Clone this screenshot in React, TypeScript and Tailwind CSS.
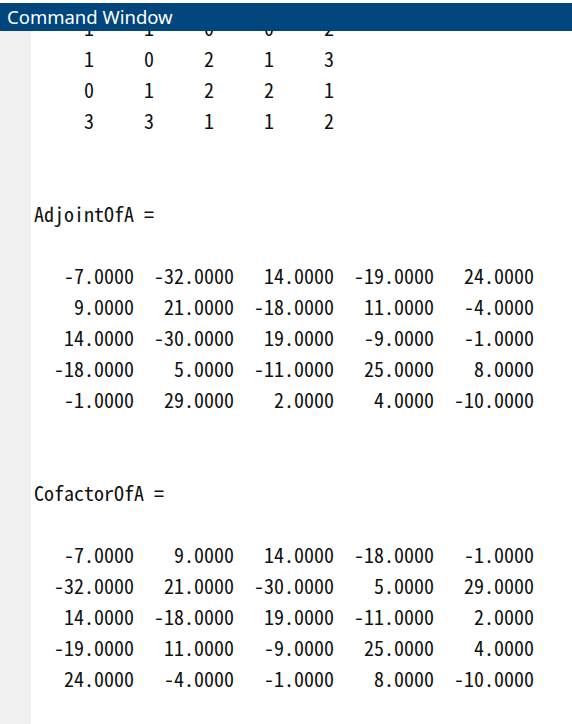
import React from "react";

const lines: string[] = [
  "     1     1     0     0     2",
  "     1     0     2     1     3",
  "     0     1     2     2     1",
  "     3     3     1     1     2",
  "",
  "",
  "AdjointOfA =",
  "",
  "   -7.0000  -32.0000   14.0000  -19.0000   24.0000",
  "    9.0000   21.0000  -18.0000   11.0000   -4.0000",
  "   14.0000  -30.0000   19.0000   -9.0000   -1.0000",
  "  -18.0000    5.0000  -11.0000   25.0000    8.0000",
  "   -1.0000   29.0000    2.0000    4.0000  -10.0000",
  "",
  "",
  "CofactorOfA =",
  "",
  "   -7.0000    9.0000   14.0000  -18.0000   -1.0000",
  "  -32.0000   21.0000  -30.0000    5.0000   29.0000",
  "   14.0000  -18.0000   19.0000  -11.0000    2.0000",
  "  -19.0000   11.0000   -9.0000   25.0000    4.0000",
  "   24.0000   -4.0000   -1.0000    8.0000  -10.0000",
  "",
];

export default function App() {
  return (
    <div className="w-[572px] h-[724px] overflow-hidden flex flex-col bg-white">
      <div className="h-[3px] shrink-0 bg-white" />
      <div className="h-[28px] shrink-0 bg-[#00457b] text-white flex items-center pl-[7px] text-[18.5px] leading-none font-['Noto_Sans',sans-serif]">
        Command Window
      </div>
      <div className="flex flex-1 min-h-0">
        <div className="w-[31px] shrink-0 bg-[#f0f0f0]" />
        <div className="flex-1 min-w-0 overflow-hidden pl-[3px]">
          <div className="-mt-[19.5px] text-[#111111] text-[20px] font-light leading-[31px] whitespace-pre font-['Noto_Sans_Mono_CJK_SC','Noto_Sans_Mono_CJK_JP','Liberation_Mono',monospace]">
            {lines.map((l, i) => (
              <div key={i} className="h-[31px]">
                {l}
              </div>
            ))}
          </div>
        </div>
      </div>
    </div>
  );
}
